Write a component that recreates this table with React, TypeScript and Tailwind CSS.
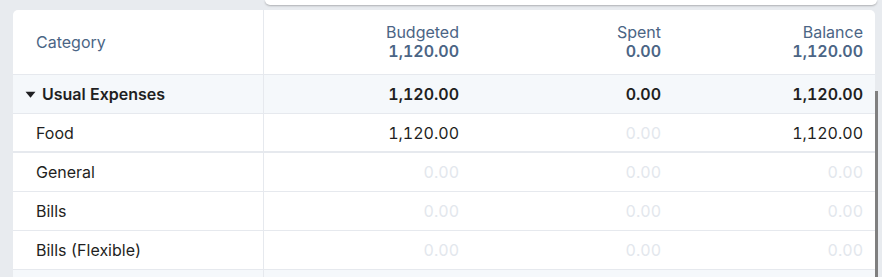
import React from "react";

type Row = { name: string; budgeted: number; spent: number; balance: number };

const rows: Row[] = [
  { name: "Food", budgeted: 1120, spent: 0, balance: 1120 },
  { name: "General", budgeted: 0, spent: 0, balance: 0 },
  { name: "Bills", budgeted: 0, spent: 0, balance: 0 },
  { name: "Bills (Flexible)", budgeted: 0, spent: 0, balance: 0 },
];

const fmt = (n: number) =>
  n.toLocaleString("en-US", { minimumFractionDigits: 2, maximumFractionDigits: 2 });

const grid = "grid grid-cols-[250px_208px_202px_202px]";

// first amount column carries the only vertical divider
const cell = (i: number) =>
  `${i === 0 ? "border-l border-[#e6e9ee]" : ""} pr-[12px] flex items-center justify-end`;

function Amount({ value, i }: { value: number; i: number }) {
  return (
    <div className={`${cell(i)} ${value === 0 ? "text-[#e3e7ed]" : "text-[#1f1f22]"}`}>
      {fmt(value)}
    </div>
  );
}

export default function App() {
  return (
    <div
      className="relative w-[882px] h-[277px] overflow-hidden bg-[#e8ebef] text-[16px] tabular-nums"
      style={{ fontFamily: "Inter, 'Noto Sans', sans-serif" }}
    >
      {/* bottom edge of the card above */}
      <div className="ml-[265px] mr-[5px] h-[5px] bg-white rounded-b-[6px] shadow-[0_1px_2px_rgba(0,0,0,0.25)]" />

      {/* budget table */}
      <div className="mt-[5px] ml-[13px] w-[862px] bg-white rounded-t-[5px]">
        <div className={`${grid} h-[65px] border-b border-[#e6e9ee] text-[#4b6585]`}>
          <div className="pl-[23px] flex items-center">Category</div>
          {[
            ["Budgeted", "1,120.00"],
            ["Spent", "0.00"],
            ["Balance", "1,120.00"],
          ].map(([label, total], i) => (
            <div
              key={label}
              className={`${i === 0 ? "border-l border-[#e6e9ee]" : ""} pr-[12px] flex flex-col items-end justify-center leading-[19px]`}
            >
              <div>{label}</div>
              <div className="font-semibold">{total}</div>
            </div>
          ))}
        </div>

        <div className={`${grid} h-[39px] border-b border-[#e6e9ee] bg-[#f5f8fb] font-semibold text-[#1f1f22]`}>
          <div className="pl-[12px] flex items-center gap-[6px]">
            <svg width="11" height="11" viewBox="0 0 10 10" className="mt-[1px]">
              <path d="M0.5 2.5 L9.5 2.5 L5 8 Z" fill="#1f1f22" />
            </svg>
            <span>Usual Expenses</span>
          </div>
          <div className={cell(0)}>1,120.00</div>
          <div className={cell(1)}>0.00</div>
          <div className={cell(2)}>1,120.00</div>
        </div>

        {rows.map((r, i) => (
          <div
            key={r.name}
            className={`${grid} h-[39px] ${i === 0 ? "border-b-2" : "border-b"} border-[#e6e9ee] text-[#1f1f22]`}
          >
            <div className="pl-[23px] flex items-center">{r.name}</div>
            <Amount value={r.budgeted} i={0} />
            <Amount value={r.spent} i={1} />
            <Amount value={r.balance} i={2} />
          </div>
        ))}

        <div className={`${grid} h-[20px] bg-[#f5f8fb]`}>
          <div />
          <div className="border-l border-[#e6e9ee]" />
          <div />
          <div />
        </div>
      </div>

      {/* scrollbar thumb */}
      <div className="absolute left-[875px] top-[91px] w-[3px] h-[186px] bg-[#7f7f7f]" />
    </div>
  );
}
